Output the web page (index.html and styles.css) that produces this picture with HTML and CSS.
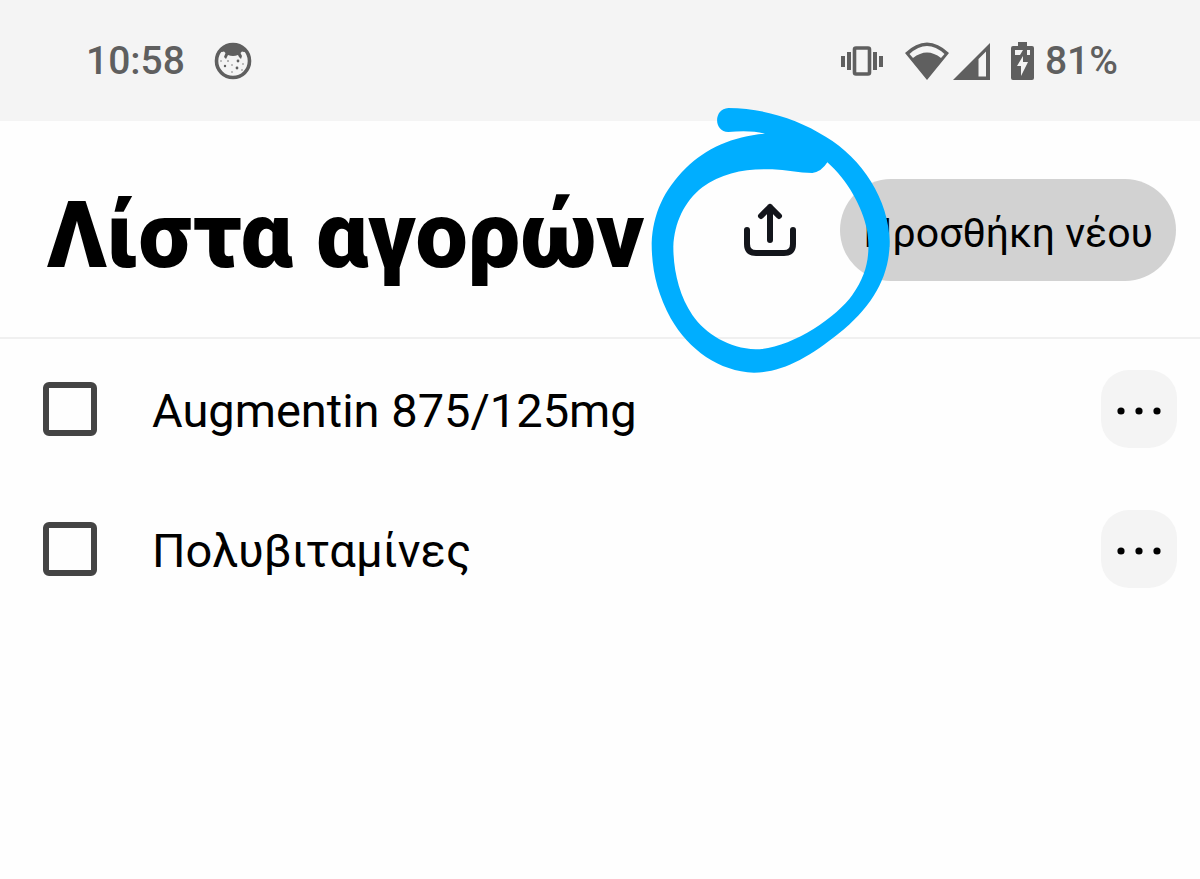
FILE: index.html
```
<!DOCTYPE html>
<html lang="el">
<head>
    <meta charset="UTF-8">
    <meta name="viewport" content="width=device-width, initial-scale=1.0">
    <title>Λίστα αγορών</title>
    <link rel="stylesheet" href="styles.css">
</head>
<body>
    <div class="status-bar">
        <div class="status-left">
            <span>10:58</span>
            <svg class="app-icon" width="38" height="38" viewBox="0 0 38 38" fill="#5f5f5f">
                <circle cx="19" cy="19" r="16.5" fill="#f4f4f4" stroke="#5f5f5f" stroke-width="3.6"/>
                <path d="M5 9Q19-6 33 9L30 10 28 9.500 26.500 11 28 14 27 17 25 15 24 13Q19 15 14 13L12 17 10 15 11.500 11 10 9.500 8 10Z"/>
                <circle cx="24" cy="19" r="1.4"/><circle cx="11" cy="24" r="1.2"/><circle cx="23" cy="26" r="1.4"/><circle cx="14" cy="19" r=".8"/>
                <circle cx="7" cy="19" r=".7"/><circle cx="18" cy="23" r=".7"/><circle cx="29" cy="22" r=".7"/><circle cx="18" cy="30" r=".7"/><circle cx="28" cy="28" r=".7"/>
            </svg>
        </div>
        <div class="status-right">
            <svg class="vibrate-icon" width="42" height="30" viewBox="0 0 42 30" fill="#5f5f5f">
                <rect x="13.5" y="2" width="15" height="26" rx="1.5" fill="none" stroke="#5f5f5f" stroke-width="3.6"/>
                <path d="M0 10h4v11H0zM6 6h4v18H6zM32 6h4v18h-4zM38 10h4v11h-4z"/>
            </svg>
            <svg class="wifi-icon" width="44" height="38" viewBox="0 0 44 38" fill="#5f5f5f">
                <path fill-rule="evenodd" d="M0 11Q22-10 44 11L22 38ZM4.500 12L8 16Q22 5 36 16L39.500 12Q22-4 4.500 12Z"/>
            </svg>
            <svg class="signal-icon" width="38" height="38" viewBox="0 0 38 38" fill="#5f5f5f">
                <path fill-rule="evenodd" d="M0 38L37 1V38ZM25.500 17V34.500H33V9.500Z"/>
            </svg>
            <svg class="battery-icon" width="23" height="38" viewBox="0 0 23 38">
                <path fill="#5f5f5f" d="M7 0h9v4h5q2 0 2 2v30q0 2-2 2H2q-2 0-2-2V6q0-2 2-2h5z"/>
                <path fill="#f4f4f4" d="M4 8h8L9 13H4zM16 8h3v5h-3zM12 14L6 24h4V34L17 20h-5z"/>
            </svg>
            <span>81%</span>
        </div>
    </div>

    <header class="header">
        <h1>Λίστα αγορών</h1>
        <button class="share" type="button" aria-label="Κοινοποίηση">
            <svg width="56" height="56" viewBox="0 0 56 56" fill="none" stroke="#13151b" stroke-width="6" stroke-linecap="round" stroke-linejoin="round">
                <path d="M28 38V5M19 14L28 5L37 14M5 28V42Q5 51 14 51H42Q51 51 51 42V28"/>
            </svg>
            <!-- marker stroke around the share button -->
            <svg class="marker" width="270" height="280" viewBox="0 0 810 840" fill="#00aeff">
                <path fill-rule="evenodd" d="M268 24C375 25 475 57 560 110C670 175 750 300 752 425C752 530 700 620 600 700C510 772 430 818 345 818C240 815 150 750 95 655C55 580 38 510 38 430C42 340 75 270 140 205C200 145 285 108 378 101C350 93 310 92 268 96C223 96 223 26 268 24ZM565 187C625 240 670 320 684 390C695 460 686 520 640 585C590 655 450 748 350 748C270 745 200 702 160 645C120 585 103 510 103 440C106 370 135 305 190 262C250 218 320 205 400 208C440 210 480 219 520 219Q548 215 565 187Z"/>
            </svg>
        </button>
        <button class="add" type="button">Προσθήκη νέου</button>
    </header>

    <ul class="list">
        <li class="item">
            <input type="checkbox" id="item1">
            <label for="item1">Augmentin 875/125mg</label>
            <button class="more" type="button" aria-label="Επιλογές">
                <svg width="44" height="8" viewBox="0 0 44 8"><circle cx="4" cy="4" r="3.600"/><circle cx="22" cy="4" r="3.600"/><circle cx="40" cy="4" r="3.600"/></svg>
            </button>
        </li>
        <li class="item">
            <input type="checkbox" id="item2">
            <label for="item2">Πολυβιταμίνες</label>
            <button class="more" type="button" aria-label="Επιλογές">
                <svg width="44" height="8" viewBox="0 0 44 8"><circle cx="4" cy="4" r="3.600"/><circle cx="22" cy="4" r="3.600"/><circle cx="40" cy="4" r="3.600"/></svg>
            </button>
        </li>
    </ul>
</body>
</html>
```
FILE: styles.css
```
* {
    margin: 0;
    padding: 0;
    box-sizing: border-box;
}

body {
    font-family: Roboto, "Noto Sans", sans-serif;
    background: #fefefe;
    color: #000;
}

button {
    border: none;
    background: none;
    font-family: inherit;
    color: inherit;
    cursor: pointer;
}

svg {
    display: block;
    flex-shrink: 0;
}

.status-bar {
    display: flex;
    justify-content: space-between;
    align-items: center;
    height: 121px;
    padding: 0 82px 0 86px;
    background: #f4f4f4;
    color: #5f5f5f;
    font-size: 39px;
    font-weight: 500;
}

.status-left,
.status-right {
    display: flex;
    align-items: center;
}

.status-left {
    gap: 29px;
}

.vibrate-icon {
    margin-right: 22px;
}

.wifi-icon {
    margin-right: 4px;
}

.signal-icon {
    margin-right: 20px;
}

.battery-icon {
    margin-right: 11px;
}

.header {
    display: flex;
    align-items: center;
    height: 218px;
    padding: 2px 24px 0 47px;
    border-bottom: 2px solid #f0f0f0;
}

h1 {
    flex: 1;
    padding-top: 12px;
    font-size: 93px;
    font-weight: 900;
    line-height: 108px;
    white-space: nowrap;
}

.share {
    position: relative;
    z-index: 1;
    margin-right: 42px;
}

.marker {
    position: absolute;
    top: -102px;
    left: -103px;
    pointer-events: none;
}

.add {
    height: 102px;
    padding: 6px 23px 0;
    border-radius: 51px;
    background: #d2d2d2;
    font-size: 41px;
    white-space: nowrap;
}

.list {
    list-style: none;
}

.item {
    display: flex;
    align-items: center;
    height: 140px;
    padding: 0 23px 0 43px;
}

.item input {
    appearance: none;
    width: 54px;
    height: 54px;
    border: 6px solid #444;
    border-radius: 6px;
}

.item label {
    flex: 1;
    margin-left: 55px;
    padding-top: 4px;
    font-size: 47px;
    line-height: 56px;
}

.more {
    display: flex;
    align-items: center;
    justify-content: center;
    width: 76px;
    height: 78px;
    padding-top: 4px;
    border-radius: 28px;
    background: #f4f4f4;
}
```
